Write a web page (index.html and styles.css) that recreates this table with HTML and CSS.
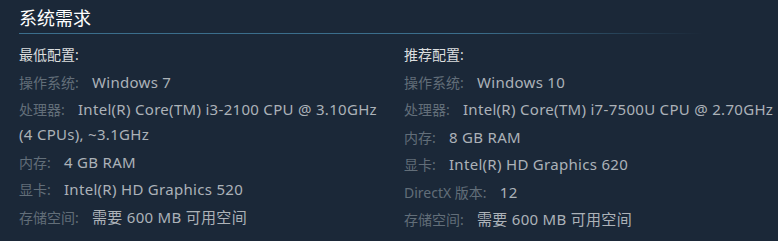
FILE: index.html
```html
<!DOCTYPE html>
<html lang="zh-CN">
<head>
<meta charset="utf-8">
<link rel="stylesheet" href="styles.css">
</head>
<body>
<section class="sysreq">
  <h2 class="title">系统需求</h2>
  <div class="cols">
    <div class="col">
      <div class="head">最低配置:</div>
      <ul class="list">
        <li><span class="k">操作系统:</span> Windows 7</li>
        <li><span class="k">处理器:</span> Intel(R) Core(TM) i3-2100 CPU @ 3.10GHz (4 CPUs), ~3.1GHz</li>
        <li><span class="k">内存:</span> 4 GB RAM</li>
        <li><span class="k">显卡:</span> Intel(R) HD Graphics 520</li>
        <li><span class="k">存储空间:</span> 需要 600 MB 可用空间</li>
      </ul>
    </div>
    <div class="col">
      <div class="head">推荐配置:</div>
      <ul class="list">
        <li><span class="k">操作系统:</span> Windows 10</li>
        <li><span class="k">处理器:</span> Intel(R) Core(TM) i7-7500U CPU @ 2.70GHz</li>
        <li><span class="k">内存:</span> 8 GB RAM</li>
        <li><span class="k">显卡:</span> Intel(R) HD Graphics 620</li>
        <li><span class="k">DirectX 版本:</span> 12</li>
        <li><span class="k">存储空间:</span> 需要 600 MB 可用空间</li>
      </ul>
    </div>
  </div>
</section>
</body>
</html>
```
FILE: styles.css
```css
html, body {
  margin: 0;
  padding: 0;
  background: #1b2838;
}
body {
  font-family: "Noto Sans", "Noto Sans CJK SC", sans-serif;
  width: 778px;
  height: 241px;
  overflow: hidden;
}
.sysreq {
  padding: 4px 0 0 19px;
}
.title {
  margin: 0;
  font-weight: normal;
  font-size: 18px;
  line-height: 28px;
  color: #ffffff;
  padding-bottom: 1px;
  border-bottom: 1px solid transparent;
  border-image: linear-gradient(to right, #3b6e8c 0%, #3b6e8c 60%, rgba(59,110,140,0) 90%) 1;
}
.cols {
  display: grid;
  grid-template-columns: 385px 1fr;
  margin-top: 9px;
}
.col:first-child {
  padding-right: 20px;
}
.head {
  font-size: 14px;
  line-height: 24px;
  color: #dcdedf;
}
.list {
  list-style: none;
  margin: 0;
  padding: 0;
  font-size: 15px;
  letter-spacing: 0.3px;
  line-height: 25px;
  color: #acb2b8;
}
.list li {
  margin-top: 2.5px;
}
.k {
  font-size: 14px;
  line-height: 16px;
  letter-spacing: 0;
  color: #626e79;
  margin-right: 9px;
}
```
